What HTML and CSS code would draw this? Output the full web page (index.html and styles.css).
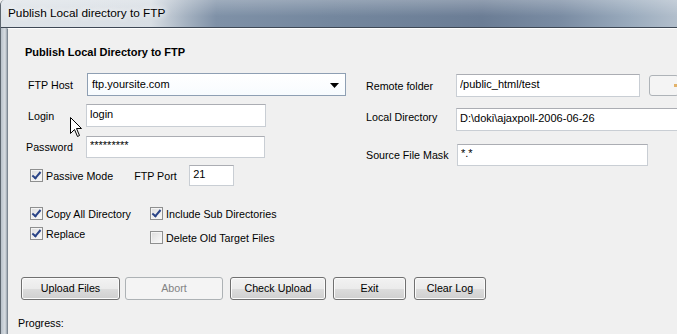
FILE: index.html
```html
<!DOCTYPE html>
<html lang="en">
<head>
  <meta charset="UTF-8">
  <title>Publish Local directory to FTP</title>
  <link rel="stylesheet" href="styles.css">
</head>
<body>

  <div class="window">
    <div class="titlebar">Publish Local directory to FTP</div>

    <div class="client">
      <h1 class="heading">Publish Local Directory to FTP</h1>

      <div class="top">
        <!-- connection -->
        <div class="col-left">
          <div class="row row-host">
            <label class="lbl">FTP Host</label>
            <div class="combo">
              <span>ftp.yoursite.com</span>
              <svg class="arrow" width="9" height="5" viewBox="0 0 9 5"><path d="M0 0H9L4.5 5Z" fill="#000"/></svg>
            </div>
          </div>
          <div class="row row-login">
            <label class="lbl">Login</label>
            <input class="field w-login" type="text" value="login">
          </div>
          <div class="row row-pass">
            <label class="lbl lbl-pass">Password</label>
            <input class="field w-pass" type="text" value="*********">
          </div>
          <div class="row row-passive">
            <span class="check on"></span>
            <span class="check-text">Passive Mode</span>
            <span class="port-lbl">FTP Port</span>
            <input class="field w-port" type="text" value="21">
          </div>
        </div>

        <!-- folders -->
        <div class="col-right">
          <div class="row row-remote">
            <label class="lbl-r">Remote folder</label>
            <input class="field w-remote" type="text" value="/public_html/test">
            <button class="browse"><span class="browse-icon"></span></button>
          </div>
          <div class="row row-local">
            <label class="lbl-r lbl-local">Local Directory</label>
            <input class="field w-local" type="text" value="D:\doki\ajaxpoll-2006-06-26">
          </div>
          <div class="row row-mask">
            <label class="lbl-r">Source File Mask</label>
            <input class="field w-mask" type="text" value="*.*">
          </div>
        </div>
      </div>

      <div class="options">
        <div class="opt-col opt-col1">
          <div class="opt"><span class="check on"></span><span class="check-text">Copy All Directory</span></div>
          <div class="opt"><span class="check on"></span><span class="check-text">Replace</span></div>
        </div>
        <div class="opt-col opt-col2">
          <div class="opt"><span class="check on"></span><span class="check-text">Include Sub Directories</span></div>
          <div class="opt"><span class="check"></span><span class="check-text">Delete Old Target Files</span></div>
        </div>
      </div>

      <div class="buttons">
        <button class="btn b-upload">Upload Files</button>
        <button class="btn b-abort" disabled>Abort</button>
        <button class="btn b-check">Check Upload</button>
        <button class="btn b-exit">Exit</button>
        <button class="btn b-clear">Clear Log</button>
      </div>

      <div class="progress">Progress:</div>
    </div>

    <!-- mouse pointer over the form -->
    <svg class="cursor" width="13" height="21" viewBox="0 0 13 21">
      <path d="M0.5 0.5V16.5L4.5 12.5L7.5 19.5L9.5 18.5L6.5 11.5H11.5Z" fill="#fff" stroke="#000" stroke-width="1" stroke-linejoin="miter"/>
    </svg>
  </div>

</body>
</html>
```

FILE: styles.css
```css
body {
  margin: 0;
  padding: 0;
  width: 677px;
  height: 334px;
  overflow: hidden;
  background-color: #f0f0f0;
  font-family: "Liberation Sans", Arial, sans-serif;
}

.window {
  position: relative;
  width: 720px;
  height: 334px;
  border-left: 1px solid #5d666f;
  border-top-left-radius: 5px;
  background: linear-gradient(to right, #b9c2cb, #d7dce1 4px, #9aa4ae 6px);
  overflow: hidden;
}

.titlebar {
  height: 27px;
  line-height: 26px;
  padding-left: 7px;
  font-size: 11.8px;
  color: #000;
  background:
    linear-gradient(to bottom, rgba(255,255,255,0.25), rgba(255,255,255,0) 60%),
    linear-gradient(to right, #dfe4e9 0, #d8dee4 150px, #a5b2c1 185px, #7f91a7 215px, #74879e 330px, #6b7d95 480px, #7a8ca3 560px, #9aabbd 630px, #b4c0cd 680px);
  border-bottom: 1px solid #3e4855;
  text-shadow: 0 0 6px #fff, 0 0 8px #fff;
}

.client {
  margin-left: 6px;
  height: 306px;
  padding-left: 10px;
  background-color: #f0f0f0;
  border-top: 1px solid #fdfdfd;
  border-left: 1px solid #7d8792;
  box-sizing: border-box;
}

.heading {
  margin: 16px 0 0 7px;
  font-size: 11px;
  line-height: 14px;
  font-weight: bold;
}

/* two columns of fields */
.top {
  display: flex;
  align-items: flex-start;
  margin: 14px 0 0 8px;
}

.col-left {
  width: 340px;
  flex-shrink: 0;
}

.col-right {
  padding-top: 1px;
}

.row {
  display: flex;
  align-items: center;
}

.lbl {
  width: 60px;
  flex-shrink: 0;
  padding-left: 2px;
  box-sizing: border-box;
  font-size: 10.7px;
}

.lbl-pass {
  padding-left: 0;
}

.lbl-r {
  width: 90px;
  flex-shrink: 0;
  font-size: 10.7px;
}

.field {
  box-sizing: border-box;
  height: 23px;
  margin: 0;
  padding: 0 0 4px 3px;
  border: 1px solid #c9ced4;
  border-top-color: #abadb3;
  background: #fff;
  font-family: "Liberation Sans", Arial, sans-serif;
  font-size: 11px;
  color: #000;
}

.combo {
  box-sizing: border-box;
  display: flex;
  align-items: center;
  justify-content: space-between;
  width: 259px;
  height: 23px;
  margin-left: 1px;
  padding: 0 6px 2px 4px;
  border: 1px solid #8e9fb3;
  background: linear-gradient(to bottom, #ffffff, #f7fbfe);
  font-size: 11px;
}

.combo .arrow {
  margin-top: 3px;
}

.row-login { margin-top: 8px; }
.row-pass { margin-top: 9px; }
.row-passive { margin-top: 7px; height: 21px; }

.w-login { width: 180px; }
.w-pass { width: 179px; height: 22px; }
.w-port { width: 45px; height: 21px; }

.row-passive .check {
  margin-left: 4px;
}

.port-lbl {
  margin-left: 21px;
  width: 55px;
  font-size: 10.7px;
}

.row-local {
  margin-top: 11px;
  align-items: flex-start;
}

.lbl-local {
  margin-top: 3px;
}

.row-mask { margin-top: 13px; }

.w-remote { width: 184px; }
.w-local { width: 240px; }
.w-mask { width: 191px; height: 22px; margin-left: 1px; }

.browse {
  position: relative;
  width: 30px;
  height: 21px;
  margin-left: 9px;
  padding: 0;
  border: 1px solid #aeb3b8;
  border-radius: 3px;
  background: #f4f4f4;
}

.browse-icon {
  position: absolute;
  right: 1px;
  top: 8px;
  width: 3px;
  height: 3px;
  background: #e2b26a;
}

/* checkboxes */
.check {
  position: relative;
  display: inline-block;
  width: 13px;
  height: 13px;
  flex-shrink: 0;
  box-sizing: border-box;
  border: 1px solid #8e8f8f;
  background: linear-gradient(135deg, #dcdcdc, #fbfbfb);
  box-shadow: inset 0 0 0 1px #f4f4f4;
}

.check.on::after {
  content: "";
  position: absolute;
  left: 3px;
  top: 0px;
  width: 3px;
  height: 7px;
  border: solid #2a4487;
  border-width: 0 2px 2px 0;
  transform: rotate(40deg);
}

.check-text {
  margin-left: 3px;
  font-size: 10.7px;
}

.options {
  display: flex;
  margin: 21px 0 0 12px;
}

.opt-col {
  display: flex;
  flex-direction: column;
}

.opt-col1 {
  width: 120px;
  gap: 7px;
}

.opt-col2 {
  gap: 11px;
}

.opt {
  display: flex;
  align-items: center;
  height: 13px;
}

/* command buttons */
.buttons {
  display: flex;
  margin: 33px 0 0 3px;
}

.btn {
  height: 23px;
  padding: 0 0 1px;
  border: 1px solid #707070;
  border-radius: 3px;
  background: linear-gradient(to bottom, #f2f2f2 0, #ebebeb 50%, #dddddd 51%, #cfcfcf 100%);
  box-shadow: inset 0 0 0 1px #fbfbfb;
  font-family: "Liberation Sans", Arial, sans-serif;
  font-size: 10.7px;
  color: #000;
}

.btn:disabled {
  border-color: #adb2b5;
  background: #f4f4f4;
  box-shadow: none;
  color: #838383;
}

.b-upload { width: 99px; }
.b-abort { width: 98px; margin-left: 5px; }
.b-check { width: 96px; margin-left: 7px; }
.b-exit { width: 73px; margin-left: 7px; }
.b-clear { width: 72px; margin-left: 8px; }

.progress {
  margin-top: 17px;
  font-size: 10.7px;
  line-height: 13px;
}

.cursor {
  position: absolute;
  left: 69px;
  top: 117px;
}
```
